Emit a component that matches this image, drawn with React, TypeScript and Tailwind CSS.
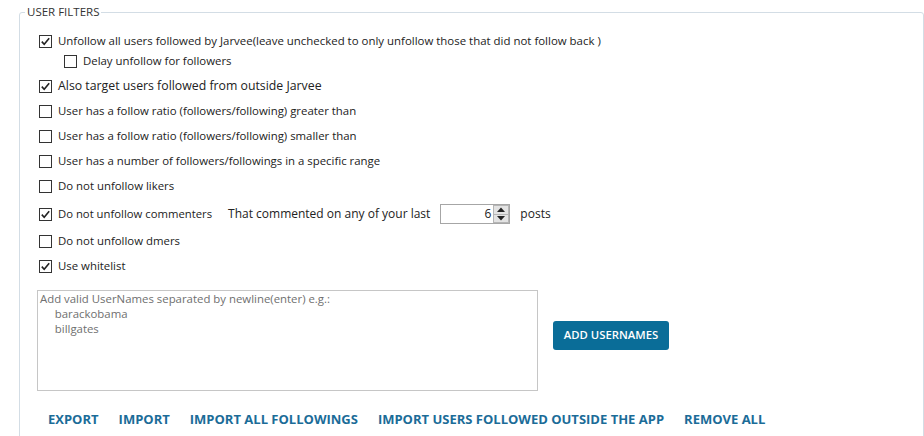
import { useState } from "react";

type Row = { label: string; checked: boolean; indent?: boolean; size?: string };

function Check({ checked }: { checked: boolean }) {
  return (
    <span className="flex h-[13px] w-[13px] shrink-0 items-center justify-center border border-[#333] bg-white">
      {checked && (
        <svg width="11" height="11" viewBox="0 0 11 11">
          <path d="M1.8 5.6 L4.2 8.2 L9.2 2.2" fill="none" stroke="#222" strokeWidth="1.6" />
        </svg>
      )}
    </span>
  );
}

function CheckRow({ row, className }: { row: Row; className: string }) {
  const [on, setOn] = useState(row.checked);
  return (
    <label
      onClick={() => setOn(!on)}
      className={`flex h-[20px] cursor-default items-center gap-[6px] ${row.indent ? "pl-[25px]" : ""} ${className}`}
    >
      <Check checked={on} />
      <span className={row.size ?? "text-[11.4px]"}>{row.label}</span>
    </label>
  );
}

export default function App() {
  const [lastPosts] = useState(6);
  const [commenters, setCommenters] = useState(true);

  return (
    <div className="h-[436px] w-[924px] overflow-hidden bg-white pt-[4px] pl-[19px] font-['Open_Sans',sans-serif] text-[#222]">
      <fieldset className="h-[460px] w-[905px] rounded-[3px] border border-[#d3dde5] pl-[5px]">
        <legend className="px-[2px] text-[11.5px] leading-[16px] text-[#333]">USER FILTERS</legend>

        <div className="flex flex-col pl-[14px]">
          <CheckRow
            className="mt-[11px]"
            row={{ label: "Unfollow all users followed by Jarvee(leave unchecked to only unfollow those that did not follow back )", checked: true, size: "text-[11.45px]" }}
          />
          <CheckRow className="" row={{ label: "Delay unfollow for followers", checked: false, indent: true }} />
          <CheckRow className="mt-[5px]" row={{ label: "Also target users followed from outside Jarvee", checked: true, size: "text-[12.3px]" }} />
          <CheckRow className="mt-[5px]" row={{ label: "User has a follow ratio (followers/following) greater than", checked: false }} />
          <CheckRow className="mt-[5px]" row={{ label: "User has a follow ratio (followers/following) smaller than", checked: false }} />
          <CheckRow className="mt-[5px]" row={{ label: "User has a number of followers/followings in a specific range", checked: false }} />
          <CheckRow className="mt-[5px]" row={{ label: "Do not unfollow likers", checked: false }} />

          <div className="mt-[8px] flex h-[20px] items-center text-[11.3px]">
            <label onClick={() => setCommenters(!commenters)} className="flex items-center gap-[6px]">
              <Check checked={commenters} />
              <span>Do not unfollow commenters</span>
            </label>
            <span className="ml-[16px] text-[12px]">That commented on any of your last</span>
            <div className="ml-[10px] flex h-[20px] w-[70px] border border-[#a6a6a6] bg-white">
              <span className="flex-1 pr-[2px] text-right text-[12px] leading-[18px]">{lastPosts}</span>
              <div className="flex w-[16px] flex-col">
                <span className="flex flex-1 items-center justify-center border border-[#b5b5b5] bg-[#e3e3e3]">
                  <svg width="8" height="5" viewBox="0 0 8 5"><path d="M0 5 L4 0.5 L8 5Z" fill="#222" /></svg>
                </span>
                <span className="flex flex-1 items-center justify-center border border-t-0 border-[#b5b5b5] bg-[#e3e3e3]">
                  <svg width="8" height="5" viewBox="0 0 8 5"><path d="M0 0 L4 4.5 L8 0Z" fill="#222" /></svg>
                </span>
              </div>
            </div>
            <span className="ml-[10px] text-[12px]">posts</span>
          </div>

          <CheckRow className="mt-[7px]" row={{ label: "Do not unfollow dmers", checked: false }} />
          <CheckRow className="mt-[5px]" row={{ label: "Use whitelist", checked: true }} />

          <div className="mt-[14px] flex items-start gap-[15px]">
            <textarea
              className="ml-[-2px] h-[101px] w-[501px] resize-none border border-[#c6c6c6] px-[2px] py-0 text-[11.4px] leading-[15px] outline-none placeholder:text-[#6f6f6f]"
              placeholder={"Add valid UserNames separated by newline(enter) e.g.:\n     barackobama\n     billgates"}
            />
            <button className="mt-[31px] h-[29px] w-[116px] rounded-[3px] bg-[#0a6d98] text-[11.3px] font-semibold text-white">
              ADD USERNAMES
            </button>
          </div>

          <div className="mt-[19px] flex h-[20px] items-center gap-[20px] pl-[9px] text-[13px] font-bold text-[#1b6c98]">
            <button>EXPORT</button>
            <button>IMPORT</button>
            <button>IMPORT ALL FOLLOWINGS</button>
            <button>IMPORT USERS FOLLOWED OUTSIDE THE APP</button>
            <button>REMOVE ALL</button>
          </div>
        </div>
      </fieldset>
    </div>
  );
}
